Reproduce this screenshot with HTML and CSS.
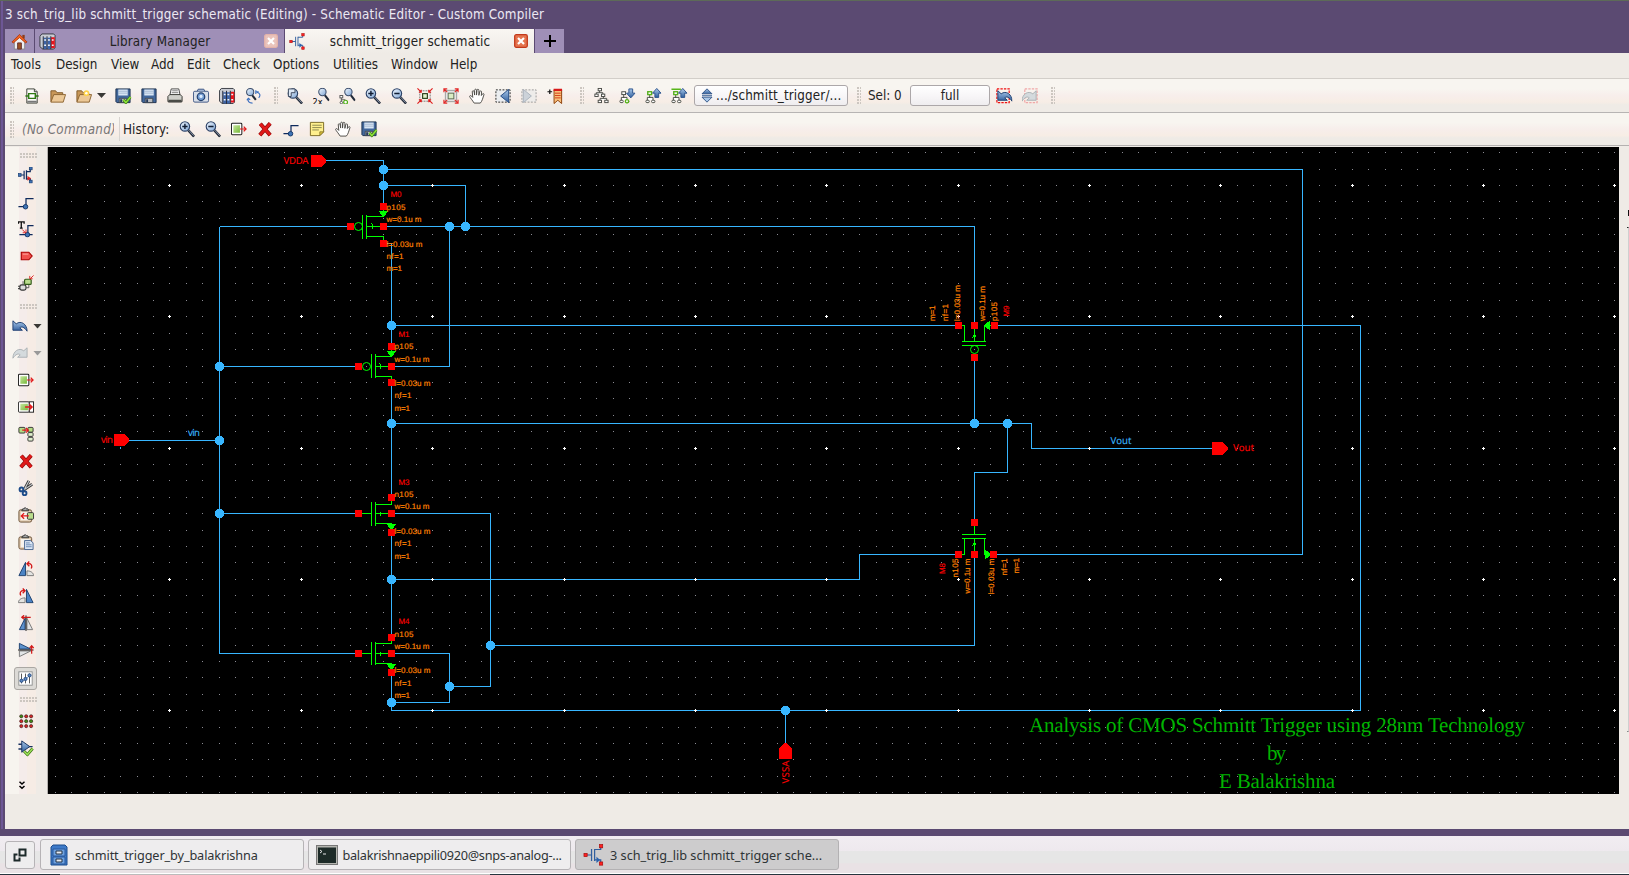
FILE: index.html
```html
<!DOCTYPE html>
<html lang="en">
<head>
<meta charset="utf-8">
<title>schmitt_trigger schematic - Custom Compiler</title>
<link rel="stylesheet" href="styles.css">
</head>
<body>
<svg class="defs" width="0" height="0">
  <defs>
    <linearGradient id="lens" x1="0" y1="0" x2="1" y2="1"><stop offset="0" stop-color="#f2f8ff"/><stop offset="1" stop-color="#7fa6d6"/></linearGradient>
    <linearGradient id="blue" x1="0" y1="0" x2="0" y2="1"><stop offset="0" stop-color="#a9c8ea"/><stop offset="1" stop-color="#2f5d9c"/></linearGradient>
    <linearGradient id="green" x1="0" y1="0" x2="1" y2="1"><stop offset="0" stop-color="#c6e69c"/><stop offset="1" stop-color="#76b93a"/></linearGradient>
    <symbol id="mag" viewBox="0 0 18 18"><path d="M10.500 10.500L16.500 17" stroke="#222b3a" stroke-width="2.600"/><path d="M11 10.500L16 16" stroke="#9aa7bb" stroke-width=".9"/><circle cx="6.800" cy="6.300" r="5" fill="url(#lens)" stroke="#2f4468" stroke-width="1.200"/></symbol>
    <symbol id="smallmag" viewBox="0 0 18 18"><path d="M12 8L16.500 14" stroke="#222b3a" stroke-width="2.200"/><circle cx="9.500" cy="4.800" r="3.900" fill="url(#lens)" stroke="#3b4d6b" stroke-width="1.100"/></symbol>
    <symbol id="zoomin" viewBox="0 0 18 18"><use href="#mag"/><path d="M4 6.300h5.600M6.800 3.500v5.600" stroke="#111d33" stroke-width="1.500"/></symbol>
    <symbol id="zoomout" viewBox="0 0 18 18"><use href="#mag"/><path d="M4 6.300h5.600" stroke="#111d33" stroke-width="1.500"/></symbol>
    <symbol id="zoomarea" viewBox="0 0 18 18"><use href="#mag"/><path d="M2 1.500h7v4H5v4H2z" fill="#dde8f6" stroke="#39465c"/></symbol>
    <symbol id="cell" viewBox="0 0 18 18"><path d="M3.500 1.500h8l3 3v12h-11z" fill="#fbfbf8" stroke="#3d4238"/><path d="M11.500 1.500v3h3" fill="#ccc" stroke="#3d4238"/><path d="M5.500 6.500h7v5h-7zM2 9h3.500M12.500 9H16" fill="#fff" stroke="#2f7a14" stroke-width="1.500"/><path d="M4 14h10v2H4z" fill="#777"/></symbol>
    <symbol id="folder" viewBox="0 0 18 18"><path d="M1.500 15V3.500h5l1.500 2h6v2" fill="#c89758" stroke="#7f5a28"/><path d="M1.500 15.500L4.500 7.500h12.500l-2.500 8z" fill="#ecc896" stroke="#8b6431"/></symbol>
    <symbol id="foldernew" viewBox="0 0 18 18"><use href="#folder"/><circle cx="11.500" cy="6" r="3" fill="#ffd24a"/><circle cx="11.500" cy="6" r="1.300" fill="#fff"/></symbol>
    <symbol id="disk" viewBox="0 0 18 18"><path d="M1.500 1.500h15v14.500H2.500l-1-1z" fill="#43689c" stroke="#1b2f4e"/><path d="M4 2h10v6.500H4z" fill="#d9e6f4"/><path d="M4 4h10M4 6h10" stroke="#8fa5c2" stroke-width=".7"/><path d="M5 11.500h8v4.500H5z" fill="#b9bcc0" stroke="#2f3640" stroke-width=".8"/><path d="M6 12.500h2v3H6z" fill="#24395c"/></symbol>
    <symbol id="diskok" viewBox="0 0 18 18"><use href="#disk"/><path d="M9.500 13l2.500 3 5-6" stroke="#3b7d13" stroke-width="3" fill="none"/><path d="M9.500 13l2.500 3 5-6" stroke="#8ee23c" stroke-width="1.600" fill="none"/></symbol>
    <symbol id="printer" viewBox="0 0 18 18"><path d="M5 1.500h8l1.500 7h-11z" fill="#fff" stroke="#444"/><path d="M6 3.500h6M5.500 5.500h7" stroke="#777"/><path d="M1.500 9.500l2-2h11l2 2v5.500h-15z" fill="#cfcfca" stroke="#33342f"/><path d="M2 13h14v3H2z" fill="#4a4b46"/></symbol>
    <symbol id="camera" viewBox="0 0 18 18"><rect x="1" y="4" width="16" height="11.500" rx="1.500" fill="#d9dfe9" stroke="#3c5482"/><path d="M5 4l1-2.200h6L13 4" fill="#9eb2d2" stroke="#3c5482"/><circle cx="9" cy="9.800" r="4" fill="#739cd2" stroke="#23406f" stroke-width="1.300"/><circle cx="9" cy="9.500" r="1.700" fill="#dcecff"/></symbol>
    <symbol id="books" viewBox="0 0 18 18"><path d="M1 3.500L3 1h12.500L17 2.500v13L15.500 17H4l-3-2.500z" fill="#c9ccd3" stroke="#33363f"/><path d="M5 5h3v12H5z" fill="#3d63a5"/><path d="M9 5h3v12H9z" fill="#3d66ad"/><path d="M12.800 4.500h3.900V16h-3.900z" fill="#e8141c"/><path d="M5.500 7.500h2M5.500 13h2M9.500 7.500h2M9.500 13h2M13.500 7.500h2M13.500 13h2" stroke="#f2f5fa" stroke-width="1.600"/><path d="M4.500 3.500V17M8.500 3.500V17M12.500 3.500V17" stroke="#1c2437"/></symbol>
    <symbol id="findrep" viewBox="0 0 18 18"><path d="M8 8l4 5" stroke="#222b3a" stroke-width="2.200"/><circle cx="6" cy="4.800" r="3.800" fill="url(#lens)" stroke="#3b4d6b" stroke-width="1.100"/><path d="M13 5c4 1 4 4 2 6M12 7V3M12 4.500h3M8.500 16.500c-4 0-5-2-4.500-4M2.500 13.500L4 11.500l2 1.500" fill="none" stroke="#3a6fc0" stroke-width="1.200"/></symbol>
    <symbol id="zoom2x" viewBox="0 0 18 18"><use href="#smallmag" x="1"/></symbol>
    <symbol id="netnodes" viewBox="0 0 18 18"><g fill="#fff" stroke="#555" stroke-width="1"><rect x="1.500" y="8.500" width="3" height="2.500"/><path d="M3 11v4M3 13h4v2"/><circle cx="3" cy="16" r="1.300"/></g><circle cx="7.500" cy="15.500" r="2" fill="#fff" stroke="#4fae16" stroke-width="1.300"/></symbol>
    <symbol id="zoomsel" viewBox="0 0 18 18"><use href="#smallmag" x="1"/><use href="#netnodes"/></symbol>
    <symbol id="fit" viewBox="0 0 18 18"><rect x="3.500" y="3.500" width="11" height="11" fill="none" stroke="#777" stroke-dasharray="2 1"/><rect x="6.500" y="6.500" width="5" height="5" fill="#e0f1cb" stroke="#243b15" stroke-width="1.200"/><path d="M1 1l4 4M17 1l-4 4M1 17l4-4M17 17l-4-4M5 2.500V5H2.500M13 2.500V5h2.500M5 15.500V13H2.500M13 15.500V13h2.500" fill="none" stroke="#e01b1b" stroke-width="1.200"/></symbol>
    <symbol id="fitsel" viewBox="0 0 18 18"><rect x="3" y="3" width="12" height="12" fill="#e4e4e4" stroke="#999"/><rect x="6" y="6" width="6" height="6" fill="#d9edc4" stroke="#5c6a52"/><path d="M1.500 5V1.500H5M13 1.500h3.500V5M1.500 13v3.500H5M16.500 13v3.500H13M2 2l3 3M16 2l-3 3M2 16l3-3M16 16l-3-3" fill="none" stroke="#e32727" stroke-width="1.200"/></symbol>
    <symbol id="hand" viewBox="0 0 18 18"><path d="M6 16.500C4 13.500 2 11 1 9.500c.5-1.500 2-1 3.500 1L4 4.500c0-1.500 1.800-1.500 2 0L6.500 8V3c0-1.600 2-1.600 2 0V8l.5-5c0-1.600 2-1.500 2 0v5.300l1-4c.5-1.300 2-.8 1.800.5L13.600 8.500l1.200-1.700c1-.9 2 0 1.500 1-1 2.700-1.700 6.700-3.800 8.700z" fill="#fff" stroke="#4b4a46" stroke-width="1"/></symbol>
    <symbol id="prev" viewBox="0 0 18 18"><rect x="1.500" y="2.500" width="15" height="13" fill="#ebedf0" stroke="#222" stroke-dasharray="2 1.500"/><path d="M15 2v14L6.500 9z" fill="url(#blue)" stroke="#234a84"/></symbol>
    <symbol id="next" viewBox="0 0 18 18"><rect x="1.500" y="2.500" width="15" height="13" fill="#eeecea" stroke="#999" stroke-dasharray="2 1.500"/><path d="M3 2v14L11.500 9z" fill="#ccd2d9" stroke="#aab2bc"/></symbol>
    <symbol id="mark" viewBox="0 0 18 18"><path d="M1 4.500h5M3.500 2v5" stroke="#111" stroke-width="1.300"/><path d="M8 2.500h8V17l-4-3.500L8 17z" fill="#f9c07a" stroke="#8b3e06"/><path d="M7.500 2.500h9" stroke="#d81919" stroke-width="2.400"/><path d="M9 6h6M9 8.500h6M9 11h6" stroke="#d53919"/></symbol>
    <symbol id="tree" viewBox="0 0 18 18"><g fill="#fff" stroke="#484a45"><rect x="6" y="1" width="3.500" height="2.500"/><path d="M7.500 3.500v2M4 7.500v-2h7v2"/><rect x="2.500" y="7" width="3.500" height="2.500"/><rect x="9.500" y="7" width="3.500" height="2.500"/><path d="M11.500 9.500v2M8 13.500v-2h7v2"/><rect x="6" y="13.500" width="3.500" height="2.500"/><rect x="13" y="13.500" width="3.500" height="2.500"/></g></symbol>
    <symbol id="branch" viewBox="0 0 18 18"><g fill="#fff" stroke="#454842"><path d="M5.500 8v3M3 13.500v-3h6v3"/><rect x="3.500" y="4.500" width="4" height="3"/><rect x="1.500" y="13.500" width="3.500" height="2.500" rx="1"/><rect x="7.500" y="13.500" width="3.500" height="2.500" rx="1"/></g></symbol>
    <symbol id="descend" viewBox="0 0 18 18"><use href="#branch"/><circle cx="9" cy="14.500" r="1.700" fill="#fff" stroke="#58b51a" stroke-width="1.400"/><path d="M11 1.500h4V6h2.500L13 11 8.500 6H11z" fill="url(#blue)" stroke="#2b528c"/></symbol>
    <symbol id="ascend" viewBox="0 0 18 18"><use href="#branch"/><rect x="3.500" y="4.500" width="4" height="3" fill="#fff" stroke="#58b51a" stroke-width="1.400"/><path d="M11 10.500h4V6h2.500L13 1 8.500 6H11z" fill="url(#blue)" stroke="#2b528c"/></symbol>
    <symbol id="ascendtop" viewBox="0 0 18 18"><use href="#ascend"/><path d="M1 1.800h10" stroke="#58b51a" stroke-width="1.500"/></symbol>
    <symbol id="updown" viewBox="0 0 14 18"><path d="M7 1l6 6H1z" fill="url(#blue)" stroke="#23477c"/><path d="M1 9.200h12" stroke="#456a9c" stroke-width="1.200"/><path d="M7 17l6-6H1z" fill="#a9c8ea" stroke="#23477c"/></symbol>
    <symbol id="undo" viewBox="0 0 18 18"><path d="M1.500 3.500v10h10L8.800 11c2-1.800 4.500-1 7.700 3.500C16.500 7 10 2.800 5 6.700z" fill="url(#blue)" stroke="#1d3e70"/></symbol>
    <symbol id="redo" viewBox="0 0 18 18"><path d="M16.500 3.500v10h-10L9.200 11c-2-1.800-4.500-1-7.700 3.500C1.500 7 8 2.800 13 6.700z" fill="#d4dadd" stroke="#aab1b5"/></symbol>
    <symbol id="undosel" viewBox="0 0 18 18"><rect x="1.500" y="1.500" width="13" height="14.500" fill="none" stroke="#e11" stroke-width="1.300" stroke-dasharray="2.500 1.200"/><use href="#undo" x="1"/></symbol>
    <symbol id="redosel" viewBox="0 0 18 18"><rect x="3.500" y="1.500" width="13" height="14.500" fill="none" stroke="#f0a8a8" stroke-width="1.300" stroke-dasharray="2.500 1.200"/><use href="#redo" x="-1"/></symbol>
    <symbol id="boxout" viewBox="0 0 18 18"><rect x="1" y="3" width="11" height="12" rx="1" fill="#fff" stroke="#222" stroke-width="1.100"/><path d="M3 5h7v8H3z" fill="url(#green)"/><path d="M10 9h6.500M14 6.500L16.500 9 14 11.500" fill="none" stroke="#e11b1b" stroke-width="1.300"/></symbol>
    <symbol id="boxin" viewBox="0 0 18 18"><rect x="1" y="3.500" width="11.500" height="11" rx="1" fill="#fff" stroke="#222"/><rect x="12.500" y="3.500" width="4.500" height="11" fill="#fff" stroke="#222"/><path d="M3 5.500h8v7H3z" fill="url(#green)"/><path d="M8 9h7M12.500 6l3 3-3 3" fill="none" stroke="#e11b1b" stroke-width="1.500"/></symbol>
    <symbol id="boxmulti" viewBox="0 0 18 18"><g fill="#b4dc84" stroke="#333"><rect x="1.500" y="2" width="6.500" height="6" rx="1"/><rect x="11" y="2" width="5.500" height="5" rx="1"/><rect x="11" y="7.500" width="5.500" height="4" rx="1" fill="#dfeecd"/><rect x="11" y="12.500" width="5.500" height="4" rx="1" fill="#dfeecd"/></g><path d="M5 5h6M9 2.500L11.500 5 9 7.500" fill="none" stroke="#e11b1b" stroke-width="1.300"/></symbol>
    <symbol id="del" viewBox="0 0 18 18"><path d="M4 3.500l10.500 12M14.500 3L3.500 15.500" stroke="#8c0909" stroke-width="4.200"/><path d="M4 3.500l10.500 12M14.500 3L3.500 15.500" stroke="#e01919" stroke-width="2.900"/></symbol>
    <symbol id="wire" viewBox="0 0 18 18"><path d="M1 14h8V5.500h8" fill="none" stroke="#0e2a5c" stroke-width="1.300"/><circle cx="8.500" cy="14" r="2.400" fill="#3f74b6" stroke="#153768"/></symbol>
    <symbol id="wiret" viewBox="0 0 18 18"><path d="M2 15h9V5.500h6M11 15h5" fill="none" stroke="#0e2a5c" stroke-width="1.300"/><circle cx="10.500" cy="15" r="2.400" fill="#3f74b6" stroke="#153768"/><path d="M1 3.500V1.500h6v2M4 1.500v6.500M2.500 8h3" stroke="#111" stroke-width="1.400" fill="none"/><path d="M5 9.500l3.500 3.500M9 9.500V13H5.500" stroke="#d22" fill="none"/></symbol>
    <symbol id="note" viewBox="0 0 18 18"><path d="M2 2h14v10l-4 4H2z" fill="#fff08e" stroke="#7a6a22"/><path d="M4 5h10M4 7.500h10M4 10h7" stroke="#8b8750"/><path d="M12 16v-4h4z" fill="#e8c93a" stroke="#7a6a22" stroke-width=".8"/></symbol>
    <symbol id="mos" viewBox="0 0 18 18"><path d="M3 9h4M7 4.500v9M9.500 4v10M9.500 5.500h4V2M9.500 13h4v3" fill="none" stroke="#152f60" stroke-width="1.300"/><path d="M10.500 10l4 2.500-4 2.500z" fill="#d22"/><g fill="#3f74b6" stroke="#173a6c" stroke-width=".7"><rect x=".8" y="7.500" width="3" height="3"/><rect x="12.500" y=".5" width="3" height="3"/><rect x="12.500" y="14.500" width="3" height="3"/></g></symbol>
    <symbol id="mosred" viewBox="0 0 18 18"><path d="M3 9h4M7 4v10M9.500 4v10M9.500 4.500h5V2.500M9.500 13h5v3" fill="none" stroke="#315f9e"/><path d="M11 10.500l3 2.500-3 2.500z" fill="#2b62ad"/><g fill="#f22" stroke="#a11" stroke-width=".6"><rect x=".8" y="7.700" width="2.600" height="2.600"/><rect x="13.500" y=".5" width="2.600" height="2.600"/><rect x="13.500" y="14.700" width="2.600" height="2.600"/></g></symbol>
    <symbol id="pin" viewBox="0 0 18 18"><path d="M4 5h8l3.500 4-3.500 4H4z" fill="#f0514d" stroke="#a00" stroke-width="1.200"/><path d="M5.500 7h6" stroke="#ffb0a8"/></symbol>
    <symbol id="plug" viewBox="0 0 18 18"><path d="M0 12.500h3M0 15h3" stroke="#444" stroke-width="1.200"/><rect x="2.500" y="11" width="6.500" height="5.500" rx="2" fill="#ddd" stroke="#333" stroke-width="1.200"/><path d="M9 14h3v-3M5 8h3M5 10h2" stroke="#555" fill="none"/><rect x="7.500" y="5" width="7" height="5.500" rx="1" fill="#b9dc8c" stroke="#32591a" stroke-width="1.200"/><path d="M17 1l-3.500 3.500M13 1.500v3h3" stroke="#d22" fill="none"/></symbol>
    <symbol id="scissors" viewBox="0 0 18 18"><path d="M12 1.500L7 11M15.500 5L6 11.500" stroke="#333" stroke-width="3"/><path d="M12 1.500L7 11M15.500 5L6 11.500" stroke="#c5c8cc" stroke-width="1.200"/><circle cx="4.200" cy="10.500" r="2" fill="none" stroke="#1d4c8a" stroke-width="2"/><circle cx="7.500" cy="14.500" r="2" fill="none" stroke="#1d4c8a" stroke-width="2"/></symbol>
    <symbol id="clip" viewBox="0 0 18 18"><rect x="1.500" y="3.500" width="13.500" height="13" rx="2" fill="#e2cbb0" stroke="#6b5237"/><path d="M3.500 5.500h9.500v9H3.500z" fill="#f7f3ed"/><path d="M4.500 4.500h7.500L11 2.500H9.500L8 1 7 2.500H5.500z" fill="#aaa" stroke="#333"/></symbol>
    <symbol id="clipin" viewBox="0 0 18 18"><use href="#clip"/><rect x="10.500" y="6.500" width="6.500" height="7" rx="1" fill="#b9dc8c" stroke="#333"/><path d="M12 10H4M7 7l-3 3 3 3" stroke="#e11b1b" stroke-width="1.400" fill="none"/></symbol>
    <symbol id="clipdoc" viewBox="0 0 18 18"><use href="#clip"/><path d="M7.500 7.500H14l2.500 2.500v7h-9z" fill="#dce7f5" stroke="#46658f"/><path d="M9 10h4M9 12h6M9 14h6" stroke="#6787b1"/></symbol>
    <symbol id="rotl" viewBox="0 0 18 18"><path d="M8.500 2v14H1.500z" fill="#4c83c4" stroke="#1d416f"/><path d="M10 16h7c0-3-3-5-7-5z" fill="#e4e4e2" stroke="#777"/><path d="M14.500 8.500c1.500-3 0-6-4-5M12.500 1L10 3.500 12.500 6" fill="none" stroke="#d31919" stroke-width="1.400"/></symbol>
    <symbol id="rotr" viewBox="0 0 18 18"><path d="M9.500 2v14h7z" fill="#4c83c4" stroke="#1d416f"/><path d="M8 16H1c0-3 3-5 7-5z" fill="#e4e4e2" stroke="#777"/><path d="M3.500 8.500C2 5.500 3.500 2.500 7.500 3.500M5.500 1L8 3.500 5.500 6" fill="none" stroke="#d31919" stroke-width="1.400"/></symbol>
    <symbol id="mirx" viewBox="0 0 18 18"><path d="M8 4v12H2z" fill="#5d91cd" stroke="#1d416f"/><path d="M10 4v12h6z" fill="#e2e4e6" stroke="#777"/><path d="M9 1v16.500" stroke="#111"/><path d="M14 3H4.500M7 .8L4.500 3 7 5.200" fill="none" stroke="#d31919" stroke-width="1.300"/></symbol>
    <symbol id="miry" viewBox="0 0 18 18"><path d="M2 8V2l12 6z" fill="#5d91cd" stroke="#1d416f"/><path d="M2 10v6l12-6z" fill="#e2e4e6" stroke="#777"/><path d="M.5 9h16.500" stroke="#111"/><path d="M15 13V4.500M12.800 7L15 4.500 17.200 7" fill="none" stroke="#d31919" stroke-width="1.300"/></symbol>
    <symbol id="sliders" viewBox="0 0 18 18"><rect x="1.500" y="1.500" width="15" height="15" fill="#fff" stroke="#8b8d8c"/><path d="M4.500 3.500v11M9 3.500v11M13.500 3.500v11" stroke="#444"/><path d="M3 12.500l5-2 6-5" stroke="#6c94c6" fill="none"/><g fill="#5c8ac5" stroke="#23477c"><circle cx="4.500" cy="11.500" r="1.800"/><circle cx="9" cy="9.500" r="1.800"/><circle cx="13.500" cy="5.500" r="1.800"/></g></symbol>
    <symbol id="dots" viewBox="0 0 18 18"><g fill="#3d8d18" stroke="#2c1212" stroke-width=".6"><circle cx="4" cy="4" r="1.700"/><circle cx="9.200" cy="9.200" r="1.700"/><circle cx="14.400" cy="9.200" r="1.700"/></g><g fill="#d22727" stroke="#2c1212" stroke-width=".6"><circle cx="9.200" cy="4" r="1.700"/><circle cx="14.400" cy="4" r="1.700"/><circle cx="4" cy="9.200" r="1.700"/><circle cx="4" cy="14.400" r="1.700"/><circle cx="9.200" cy="14.400" r="1.700"/><circle cx="14.400" cy="14.400" r="1.700"/></g></symbol>
    <symbol id="plugok" viewBox="0 0 18 18"><path d="M1 5h4M1 10h4M12 7.500h4" stroke="#16315f" stroke-width="1.500"/><path d="M4.500 1.500L13 7.500l-8.500 6z" fill="url(#blue)" stroke="#16315f"/><path d="M7 12.500l3.500 3.500L16 9.500" stroke="#387413" stroke-width="3" fill="none"/><path d="M7 12.500l3.500 3.500L16 9.500" stroke="#9fe35a" stroke-width="1.500" fill="none"/></symbol>
    <symbol id="home" viewBox="0 0 18 18"><path d="M3.500 8v9h11V8L9 3z" fill="#eef0f2" stroke="#888"/><path d="M12 2h2.500v4H12z" fill="#8c3c1a"/><path d="M1 9.500L9 1.500l8 8-1.500 1L9 5l-6.500 5.500z" fill="#ef6222" stroke="#a63209" stroke-width=".8"/><path d="M7 10.500h4V17H7z" fill="#9c5222" stroke="#633"/></symbol>
    <symbol id="close" viewBox="0 0 14 14"><rect x=".7" y=".7" width="12.600" height="12.600" rx="1.500" fill="#e5744f" stroke="#c3391b" stroke-width="1.300"/><path d="M4 4l6 6M10 4l-6 6" stroke="#fff" stroke-width="2.200"/></symbol>
    <symbol id="closepale" viewBox="0 0 14 14"><rect x=".7" y=".7" width="12.600" height="12.600" rx="1.500" fill="#eac4bc" stroke="#e3b3aa" stroke-width="1.300"/><path d="M4 4l6 6M10 4l-6 6" stroke="#fff" stroke-width="2.200"/></symbol>
  </defs>
</svg>

<div class="window">
  <header class="title">3 sch_trig_lib schmitt_trigger schematic (Editing) - Schematic Editor - Custom Compiler</header>
  <nav class="tabs">
    <div class="tab tab-home"><svg class="i16"><use href="#home"/></svg></div>
    <div class="tab tab-doc"><svg class="i16"><use href="#books"/></svg><span>Library Manager</span><svg class="x"><use href="#closepale"/></svg></div>
    <div class="tab tab-doc active"><svg class="i16"><use href="#mosred"/></svg><span>schmitt_trigger schematic</span><svg class="x"><use href="#close"/></svg></div>
    <div class="tab tab-add"><svg class="plus" viewBox="0 0 12 12"><path d="M0 6h12M6 0v12" stroke="#000" stroke-width="2"/></svg></div>
  </nav>
  <nav class="menu"><span>Tools</span><span>Design</span><span>View</span><span>Add</span><span>Edit</span><span>Check</span><span>Options</span><span>Utilities</span><span>Window</span><span>Help</span></nav>

  <div class="toolbar main-tools">
    <i class="grip"></i>
    <svg><use href="#cell"/></svg><svg><use href="#folder"/></svg><svg><use href="#foldernew"/></svg><i class="caret"></i>
    <svg><use href="#diskok"/></svg><svg><use href="#disk"/></svg><svg><use href="#printer"/></svg><svg><use href="#camera"/></svg><svg><use href="#books"/></svg><svg><use href="#findrep"/></svg>
    <i class="grip mid"></i>
    <svg><use href="#zoomarea"/></svg><svg><use href="#zoom2x"/><text x="0" y="17" class="two">2x</text></svg><svg><use href="#zoomsel"/></svg><svg><use href="#zoomin"/></svg><svg><use href="#zoomout"/></svg><svg><use href="#fit"/></svg><svg><use href="#fitsel"/></svg><svg><use href="#hand"/></svg><svg><use href="#prev"/></svg><svg><use href="#next"/></svg><svg><use href="#mark"/></svg>
    <i class="grip wide"></i>
    <svg><use href="#tree"/></svg><svg><use href="#descend"/></svg><svg><use href="#ascend"/></svg><svg><use href="#ascendtop"/></svg>
    <div class="button path"><svg class="ud"><use href="#updown"/></svg><span>.../schmitt_trigger/...</span></div>
    <i class="grip tight"></i>
    <span class="sel">Sel: 0</span>
    <div class="button full">full</div>
    <svg class="after"><use href="#undosel"/></svg><svg><use href="#redosel"/></svg>
    <i class="grip mid"></i>
  </div>

  <div class="toolbar history">
    <i class="grip"></i>
    <span class="nocmd">(No Command)</span><i class="sep"></i><span class="hist">History:</span>
    <svg><use href="#zoomin"/></svg><svg><use href="#zoomout"/></svg><svg><use href="#boxout"/></svg><svg><use href="#del"/></svg><svg><use href="#wire"/></svg><svg><use href="#note"/></svg><svg><use href="#hand"/></svg><svg><use href="#diskok"/></svg>
  </div>

  <main class="work">
    <aside class="side">
      <i class="hgrip"></i>
      <div class="cells first"><svg><use href="#mos"/></svg><svg><use href="#wire"/></svg><svg><use href="#wiret"/></svg><svg><use href="#pin"/></svg><svg><use href="#plug"/></svg></div>
      <i class="hgrip"></i>
      <div class="cells second">
        <div class="drop"><svg><use href="#undo"/></svg><i class="caret"></i></div>
        <div class="drop off"><svg><use href="#redo"/></svg><i class="caret"></i></div>
        <svg><use href="#boxout"/></svg><svg><use href="#boxin"/></svg><svg><use href="#boxmulti"/></svg><svg><use href="#del"/></svg><svg><use href="#scissors"/></svg><svg><use href="#clipin"/></svg><svg><use href="#clipdoc"/></svg><svg><use href="#rotl"/></svg><svg><use href="#rotr"/></svg><svg><use href="#mirx"/></svg><svg><use href="#miry"/></svg>
        <div class="pressed"><svg><use href="#sliders"/></svg></div>
      </div>
      <i class="hgrip low"></i>
      <div class="cells third"><svg><use href="#dots"/></svg><svg><use href="#plugok"/></svg></div>
      <svg class="more" viewBox="0 0 8 9"><path d="M1.500 .8L4 3l2.500-2.200M1.500 5L4 7.300 6.500 5" fill="none" stroke="#000" stroke-width="1.500"/></svg>
    </aside>

    <svg class="sheet" viewBox="48 147 1571 647">
      <path id="grid-minor" class="minor"/>
      <g class="wires" transform="translate(.5 .5)">
        <path d="M325 160H383V206M383 169H1302V554H993M383 185H465V226M383 226H974V325M449 226V366H391M219 226H350M219 226V653H358M219 366H358M219 513H358M128 440H219M120 446V448M383 243H391V346M391 382V497M391 325H958M994 325H1360V710H391M391 423H1031V448H1212M974 357V423M1007 423V472H974V522M391 513H490V686H449M490 645H974V554M391 532V637M391 579H859V554H958M391 653H449V702H391M391 672V710M785 710V745"/>
      </g>
      <path id="grid-major" class="major"/>
      <g class="mos" transform="translate(.5 .5)">
        <path d="M362 214V238M366 214V238M366 216H383V206M366 226H383M366 236H383V243M371 223l2 3-2 3"/>
        <path d="M371 353V377M375 353V377M375 356H391V346M375 366H391M375 376H391V382M379 363l2 3-2 3"/>
        <path d="M361 513H371M371 501V525M375 501V525M375 504H391V497M375 513H391M375 523H391V532M380 511V515"/>
        <path d="M361 653H371M371 641V664M375 641V664M375 643H391V637M375 653H391M375 663H391V672M380 651V655"/>
        <path d="M961.600 341H985.400M961.600 345H985.400M958 325H964V341M984 341V325H994M974 325V341M972.600 336h2.800M972.600 335h2.800M971.600 337h1"/>
        <path d="M961.600 534H985.400M961.600 538H985.400M958 554H964V538M984 538V554H993M974 522V534M974 538V554M972.600 543h2.800M972.600 544h2.800M971.600 545h1"/>
        <circle cx="358" cy="226" r="4"/><circle cx="366" cy="366" r="4"/><circle cx="974" cy="349" r="4"/>
      </g>
      <g class="arrows"><path d="M379 211h9l-3 5h-3zM387 351h9l-3 5h-3zM387 524h9l-3 5h-3zM387 664h9l-3 5h-3zM990 321v9l-5-3v-3zM985 549.500v10l5-4v-2z"/></g>
      <g class="pads">
        <path d="M380 203h7v7h-7zM380 223h7v7h-7zM380 240h7v7h-7zM347 223h7v7h-7z"/>
        <path d="M388 343h7v7h-7zM388 363h7v7h-7zM388 379h7v7h-7zM355 363h7v7h-7z"/>
        <path d="M388 494h7v7h-7zM388 510h7v7h-7zM388 529h7v7h-7zM355 510h7v7h-7z"/>
        <path d="M388 634h7v7h-7zM388 650h7v7h-7zM388 669h7v7h-7zM355 650h7v7h-7z"/>
        <path d="M955 322h7v7h-7zM971 322h7v7h-7zM991 322h7v7h-7zM971 354h7v7h-7z"/>
        <path d="M955 551h7v7h-7zM971 551h7v7h-7zM990 551h7v7h-7zM971 519h7v7h-7z"/>
        <path d="M311 155h10l4.500 4v4l-4.500 4h-10zM114 434h10l4.500 4v4l-4.500 4h-10zM1212 442h10l5.500 5v3l-5.500 5h-10zM779 759v-10l5-6h3l5 6v10z"/>
      </g>
      <g class="joints">
        <circle cx="383.500" cy="169.500" r="4.600"/><circle cx="383.500" cy="185.500" r="4.600"/><circle cx="449.500" cy="226.500" r="4.600"/><circle cx="465.500" cy="226.500" r="4.600"/>
        <circle cx="219.500" cy="366.500" r="4.600"/><circle cx="219.500" cy="440.500" r="4.600"/><circle cx="219.500" cy="513.500" r="4.600"/>
        <circle cx="391.500" cy="325.500" r="4.600"/><circle cx="391.500" cy="423.500" r="4.600"/><circle cx="391.500" cy="579.500" r="4.600"/><circle cx="391.500" cy="702.500" r="4.600"/>
        <circle cx="449.500" cy="686.500" r="4.600"/><circle cx="490.500" cy="645.500" r="4.600"/><circle cx="974.500" cy="423.500" r="4.600"/><circle cx="1007.500" cy="423.500" r="4.600"/><circle cx="785.500" cy="710.500" r="4.600"/>
      </g>
      <g class="param">
        <text x="386.500" y="210" textLength="19">p105</text><text x="386.500" y="222" textLength="35">w=0.1u m</text><text x="386.500" y="247" textLength="36">l=0.03u m</text><text x="386.500" y="259" textLength="17">nf=1</text><text x="386.500" y="271" textLength="15.500">m=1</text>
        <text x="394.500" y="349" textLength="19">p105</text><text x="394.500" y="362" textLength="35">w=0.1u m</text><text x="394.500" y="386" textLength="36">l=0.03u m</text><text x="394.500" y="398" textLength="17">nf=1</text><text x="394.500" y="411" textLength="15.500">m=1</text>
        <text x="394.500" y="497" textLength="19">n105</text><text x="394.500" y="509" textLength="35">w=0.1u m</text><text x="394.500" y="534" textLength="36">l=0.03u m</text><text x="394.500" y="546" textLength="17">nf=1</text><text x="394.500" y="559" textLength="15.500">m=1</text>
        <text x="394.500" y="637" textLength="19">n105</text><text x="394.500" y="649" textLength="35">w=0.1u m</text><text x="394.500" y="673" textLength="36">l=0.03u m</text><text x="394.500" y="686" textLength="17">nf=1</text><text x="394.500" y="698" textLength="15.500">m=1</text>
        <text transform="translate(935 321) rotate(-90)" textLength="15.500">m=1</text><text transform="translate(948 321) rotate(-90)" textLength="17">nf=1</text><text transform="translate(960 321) rotate(-90)" textLength="36">l=0.03u m</text><text transform="translate(985 321) rotate(-90)" textLength="35">w=0.1u m</text><text transform="translate(997 321) rotate(-90)" textLength="19">p105</text>
        <text transform="translate(958 577.500) rotate(-90)" textLength="19">n105</text><text transform="translate(970 593.500) rotate(-90)" textLength="35">w=0.1u m</text><text transform="translate(994 594.500) rotate(-90)" textLength="36">l=0.03u m</text><text transform="translate(1007 575.500) rotate(-90)" textLength="17">nf=1</text><text transform="translate(1019 573.500) rotate(-90)" textLength="15.500">m=1</text>
      </g>
      <g class="name">
        <text x="390.500" y="197" textLength="11">M0</text><text x="398.500" y="337" textLength="11">M1</text><text x="398.500" y="485" textLength="11">M3</text><text x="398.500" y="624" textLength="11">M4</text>
        <text transform="translate(1009 316.500) rotate(-90)" textLength="11">M9</text><text transform="translate(945 574) rotate(-90)" textLength="11">M8</text>
      </g>
      <g class="port"><text x="283.500" y="163.500" textLength="25">VDDA</text><text x="101" y="443" textLength="12">vin</text><text x="1233" y="451" textLength="21">Vout</text><text transform="translate(789 783.500) rotate(-90)" textLength="23">VSSA</text></g>
      <g class="port net"><text x="188" y="436" textLength="12">vin</text><text x="1110.500" y="444" textLength="21">Vout</text></g>
      <g class="caption"><text x="1029" y="731.500" textLength="496">Analysis of CMOS Schmitt Trigger using 28nm Technology</text><text x="1267" y="760" textLength="19">by</text><text x="1219" y="788" textLength="116">E Balakrishna</text></g>
    </svg>
    <aside class="rail"><i class="knob"></i><i class="split"></i><i class="edge"></i></aside>
  </main>
</div>

<footer class="taskbar">
  <div class="task launcher"><svg viewBox="0 0 14 14"><path d="M6.500 1.500h6v6h-6zM4.500 6.500h-3v6h5v-3" fill="none" stroke="#1c2a2a" stroke-width="2"/></svg></div>
  <div class="task"><svg viewBox="0 0 18 22"><path d="M1 3l2-2h12l2 2v18H1z" fill="#3d7ac8" stroke="#1d4c8c"/><path d="M3 5h12v7H3zM3 13h12v7H3z" fill="#6ea2e0" stroke="#28599c"/><path d="M6 7h6v3H6zM6 15h6v3H6z" fill="#e8ecf2" stroke="#234"/></svg><span class="first-label">schmitt_trigger_by_balakrishna</span></div>
  <div class="task"><svg viewBox="0 0 22 22"><rect x=".5" y="1.500" width="21" height="19" fill="#b5b6b0" stroke="#777"/><rect x="2" y="3.500" width="18" height="15.500" fill="#1d2b28"/><path d="M4 6l2 1.500L4 9M7 10h3" stroke="#e6e6e6" fill="none"/></svg><span class="term-label">balakrishnaeppili0920@snps-analog-...</span></div>
  <div class="task current"><svg viewBox="0 0 18 18"><use href="#mosred"/></svg><span>3 sch_trig_lib schmitt_trigger sche...</span></div>
</footer>
<div class="under"></div>
<script src="grid.js"></script>
</body>
</html>
```
FILE: styles.css
```css
* { box-sizing: border-box; }
body { margin: 0; width: 1629px; height: 875px; overflow: hidden; display: flex; flex-direction: column; background: #efebe6; font-family: "DejaVu Sans Condensed", "DejaVu Sans", sans-serif; font-stretch: condensed; font-size: 13.300px; color: #222; }
.defs { position: absolute; }
i { display: block; flex: none; }
svg { flex: none; display: block; }

.window { height: 836px; flex: none; padding-left: 5px; border-top: 1px solid #5d6a58; border-bottom: 6px solid #5b4a72; background: linear-gradient(90deg, #5b4a72 0 1px, #6d5795 1px 3px, #5b4a72 3px 5px, #efebe6 5px); display: flex; flex-direction: column; box-shadow: inset 0 -1px #5b4a72; }
.title { height: 28px; background: #5b4a72; color: #ece8f2; line-height: 28px; white-space: nowrap; letter-spacing: .19px; }
.tabs { height: 24px; display: flex; gap: 1px; background: #5b4a72; }
.tab { background: #9f8fb7; display: flex; align-items: center; }
.tab-home { width: 29px; justify-content: center; }
.tab-doc { width: 249px; padding: 0 6px 0 4px; }
.tab-doc span { flex: 1; text-align: center; letter-spacing: .17px; padding-top: 1px; }
.tab-add { width: 29px; justify-content: center; }
.active { background: linear-gradient(#f9f6f2, #efebe6); }
.i16 { width: 17px; height: 17px; }
.x { width: 14px; height: 14px; }
.plus { width: 12px; height: 12px; }
.menu { height: 25px; padding-left: 6px; display: grid; grid-template-columns: 45px 55px 40px 36px 36px 50px 60px 58px 59px 50px; line-height: 24px; }
.menu span:first-child { letter-spacing: .2px; }

.toolbar { display: flex; align-items: center; padding-left: 5px; gap: 8px; border-top: 1px solid #d2cec9; background: linear-gradient(#f8f5f0 0 30%, #f7eeeb 50%, #f7ede5 70%, #efebe6 78%); }
.main-tools { height: 34px; }
.history { height: 33px; border-top-color: #b7b4b3; }
.toolbar > svg { width: 18px; height: 18px; padding: .5px; }
.grip { width: 4px; height: 17px; background: radial-gradient(circle at 1px 1px, #ccc6c0 0 1px, transparent 1.200px) 0 0 / 3px 3px; }
.main-tools > .grip:first-child { margin-right: 1px; }
.toolbar .mid { margin-left: 4px; }
.toolbar .wide { margin-left: 8px; }
.toolbar .tight { margin-left: 1px; }
.toolbar .caret { width: 9px; height: 5px; margin-left: -4px; }
.caret { width: 9px; height: 5px; background: #3a3835; clip-path: polygon(0 0, 100% 0, 50% 100%); }
.two { font-size: 9px; fill: #000; }
.button { height: 21px; border: 1px solid #aca7a9; border-radius: 3px; background: linear-gradient(#fff, #f8f6f8 50%, #efedef); display: flex; align-items: center; }
.path { width: 154px; margin-left: -2px; padding-left: 6px; gap: 3px; white-space: nowrap; letter-spacing: .15px; }
.ud { width: 12px; height: 15px; }
.sel { width: 36px; margin-left: -1px; white-space: nowrap; }
.full { width: 80px; margin-left: -2px; justify-content: center; }
.toolbar .after { margin-left: -3px; }
.nocmd { width: 92px; font-style: oblique; color: #777; white-space: nowrap; overflow: hidden; letter-spacing: .25px; }
.sep { width: 1px; height: 24px; background: #d8d4d0; margin-left: -3px; }
.hist { width: 46px; margin: 0 1px 0 -5px; letter-spacing: .1px; }

.work { flex: 1; min-height: 0; display: flex; align-items: flex-start; padding-top: 1px; border-top: 1px solid #b4b1b0; }
.side { width: 43px; height: 647px; flex: none; border-right: 1px solid #b5b2af; background: linear-gradient(90deg, #f7f4ef 0 14px, #f5ecea 14px 22px, #f6ece5 22px 31px, #efebe6 31px); display: flex; flex-direction: column; }
.hgrip { width: 17px; height: 5px; margin: 6px 0 4px 15px; background: radial-gradient(circle at 1px 1px, #ccc6c0 0 1px, transparent 1.200px) 0 0 / 3px 3px; }
.cells { display: flex; flex-direction: column; gap: 9px; padding-left: 12px; }
.cells svg { width: 18px; height: 18px; padding: .5px; }
.first { padding-top: 4px; padding-bottom: 6px; }
.second { padding-top: 4px; }
.drop { display: flex; align-items: center; margin-left: -6px; }
.drop .caret { margin-left: 4px; }
.off .caret { background: #999; }
.cells .pressed { width: 23px; height: 23px; margin: -1px 0 0 -3px; border: 1px solid #aaa7a3; border-radius: 3px; background: #dcdad6; display: grid; place-items: center; }
.pressed svg { width: 17px; height: 17px; }
.low { margin-top: 7px; }
.third { padding-top: 6px; }
.more { width: 8px; height: 9px; margin: 24px 0 0 13px; }

.sheet { width: 1571px; height: 647px; background: #000; }
.minor { fill: none; stroke: #8c8c94; shape-rendering: crispEdges; }
.major { fill: none; stroke: #fff; shape-rendering: crispEdges; }
.wires path { fill: none; stroke: #38b6ff; shape-rendering: crispEdges; }
.mos { fill: none; stroke: #0f0; shape-rendering: crispEdges; }
.mos circle { shape-rendering: auto; }
.arrows { fill: #0f0; shape-rendering: crispEdges; }
.pads { fill: #f00; shape-rendering: crispEdges; }
.joints { fill: #38b6ff; shape-rendering: crispEdges; }
.sheet text { font-family: "Noto Sans", sans-serif; font-stretch: normal; white-space: pre; text-rendering: geometricPrecision; }
.sheet .param text { font-family: "Liberation Sans", sans-serif; font-size: 8px; fill: #ff8000; stroke: #ff8000; stroke-width: .2px; }
.sheet .name text { font-family: "Liberation Sans", sans-serif; font-size: 8px; fill: #f00; stroke: #f00; stroke-width: .15px; }
.sheet .port text { font-size: 9.600px; fill: #f00; stroke: #f00; stroke-width: .1px; }
.sheet .net text { fill: #38b6ff; stroke: #38b6ff; }
.sheet .caption text { font-family: "Liberation Serif", serif; font-size: 21px; fill: #00b400; }

.rail { width: 10px; height: 647px; display: grid; grid-template-rows: 69px 247px 20px 249px 1fr; grid-template-columns: 10px; }
.knob { grid-row: 1; align-self: end; justify-self: end; width: 1px; height: 6px; background: #111; }
.split { grid-row: 3; margin-left: 3px; width: 3px; background: repeating-linear-gradient(#b9b5b0 0 2px, #f4f1ed 2px 3px); }
.edge { grid-row: 2 / 5; grid-column: 1; justify-self: end; width: 2px; margin-top: 11px; border-top: 1px solid #222; border-right: 1px solid #cfcfcf; border-bottom: 1px solid #888; }

.taskbar { height: 37px; flex: none; display: flex; align-items: center; gap: 4px; padding-left: 5px; background: linear-gradient(#f1edf1, #eee9ee 40%, #e6e6e6 42% 72%, #e9e2e5 75%); font-family: "Noto Sans", sans-serif; font-stretch: normal; font-size: 12.700px; color: #2e3436; }
.task { width: 263.500px; height: 31px; border: 1px solid #b6b3b6; border-radius: 3px; background: #eeedee; display: flex; align-items: center; padding-left: 7px; gap: 5px; white-space: nowrap; }
.task svg { width: 22px; height: 22px; }
.first-label { letter-spacing: -.1px; }
.term-label { letter-spacing: -.28px; }
.launcher { width: 30px; height: 28px; padding: 0; justify-content: center; margin-right: 1px; }
.launcher svg { width: 14px; height: 14px; }
.current { background: #cdcccd; border-color: #b3b1b3; }
.under { height: 2px; border-top: 1px solid #fff; background: linear-gradient(90deg, #26343e 0 60px, #bbb 60px 490px, #26343e 490px); }
```
FILE: grid.js
```js
// Snapping grid: a dot every eighth of the major pitch, a cross on each major point.
const origin = { x: 169.95, y: 185.5 };
const pitch = { x: 131.36, y: 131.3 };
let minor = "";
let major = "";
for (let i = -7; i <= 88; i++) {
  const x = Math.floor(origin.x + (i * pitch.x) / 8);
  for (let j = -2; j <= 37; j++) {
    const y = Math.floor(origin.y + (j * pitch.y) / 8);
    if (i % 8 === 0 && j % 8 === 0) {
      major += `M${x - 1} ${y + 0.5}h3M${x + 0.5} ${y - 1}v3`;
    } else {
      minor += `M${x} ${y + 0.5}h1`;
    }
  }
}
document.getElementById("grid-minor").setAttribute("d", minor);
document.getElementById("grid-major").setAttribute("d", major);
```
